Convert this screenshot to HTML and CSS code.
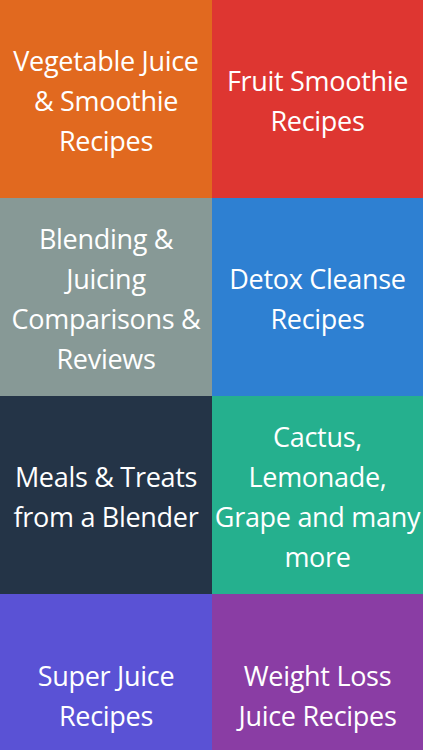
FILE: index.html
```html
<!DOCTYPE html>
<html>
<head>
<meta charset="utf-8">
<link rel="stylesheet" href="styles.css">
</head>
<body>
<div class="grid">
  <div class="tile orange"><span>Vegetable Juice<br>&amp; Smoothie<br>Recipes</span></div>
  <div class="tile red"><span>Fruit Smoothie<br>Recipes</span></div>
  <div class="tile grey"><span>Blending &amp;<br>Juicing<br>Comparisons &amp;<br>Reviews</span></div>
  <div class="tile blue"><span>Detox Cleanse<br>Recipes</span></div>
  <div class="tile dark"><span>Meals &amp; Treats<br>from a Blender</span></div>
  <div class="tile teal"><span>Cactus,<br>Lemonade,<br>Grape and many<br>more</span></div>
  <div class="tile indigo"><span>Super Juice<br>Recipes</span></div>
  <div class="tile purple"><span>Weight Loss<br>Juice Recipes</span></div>
</div>
</body>
</html>
```
FILE: styles.css
```css
html, body {
  margin: 0;
  padding: 0;
  width: 423px;
  height: 750px;
  overflow: hidden;
}
.grid {
  display: grid;
  grid-template-columns: 212px 211px;
  grid-template-rows: 198px 198px 198px 156px;
  height: 750px;
  overflow: hidden;
}
.tile {
  display: flex;
  align-items: center;
  justify-content: center;
  text-align: center;
  color: #fff;
  font-family: "Open Sans", "Noto Sans", sans-serif;
  font-size: 27px;
  line-height: 40px;
  letter-spacing: -0.3px;
  padding-top: 4px;
  box-sizing: border-box;
}
.tile:nth-child(n+7) {
  align-items: flex-start;
  padding-top: 62px;
}
.orange { background: #e1691f; }
.red { background: #de3631; }
.grey { background: #879996; }
.blue { background: #2e80d2; }
.dark { background: #243447; }
.teal { background: #25b08e; }
.indigo { background: #5a52d5; }
.purple { background: #8a3da4; }
```
